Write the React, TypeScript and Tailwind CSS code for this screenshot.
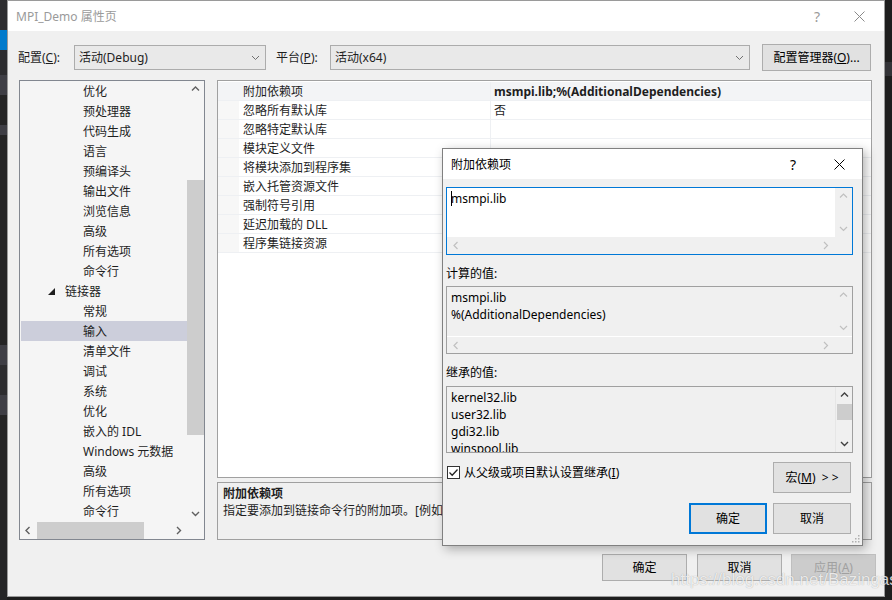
import React from "react";

type Dir = "up" | "down" | "left" | "right";

function Chev({ dir, color = "#606060", w = 1.4 }: { dir: Dir; color?: string; w?: number }) {
  const d: Record<Dir, string> = {
    up: "M1 5.5 L4.5 2 L8 5.5",
    down: "M1 3 L4.5 6.5 L8 3",
    left: "M5.5 1 L2 4.5 L5.5 8",
    right: "M3 1 L6.5 4.5 L3 8",
  };
  return (
    <svg width="9" height="9" viewBox="0 0 9 9" fill="none">
      <path d={d[dir]} stroke={color} strokeWidth={w} />
    </svg>
  );
}

function CloseX({ color }: { color: string }) {
  return (
    <svg width="11" height="11" viewBox="0 0 11 11">
      <path d="M0.5 0.5 L10.5 10.5 M10.5 0.5 L0.5 10.5" stroke={color} strokeWidth="1" />
    </svg>
  );
}

const treeItems: { t: string; head?: boolean; sel?: boolean }[] = [
  { t: "优化" },
  { t: "预处理器" },
  { t: "代码生成" },
  { t: "语言" },
  { t: "预编译头" },
  { t: "输出文件" },
  { t: "浏览信息" },
  { t: "高级" },
  { t: "所有选项" },
  { t: "命令行" },
  { t: "链接器", head: true },
  { t: "常规" },
  { t: "输入", sel: true },
  { t: "清单文件" },
  { t: "调试" },
  { t: "系统" },
  { t: "优化" },
  { t: "嵌入的 IDL" },
  { t: "Windows 元数据" },
  { t: "高级" },
  { t: "所有选项" },
  { t: "命令行" },
];

const props: [string, string][] = [
  ["附加依赖项", "msmpi.lib;%(AdditionalDependencies)"],
  ["忽略所有默认库", "否"],
  ["忽略特定默认库", ""],
  ["模块定义文件", ""],
  ["将模块添加到程序集", ""],
  ["嵌入托管资源文件", ""],
  ["强制符号引用", ""],
  ["延迟加载的 DLL", ""],
  ["程序集链接资源", ""],
];

const btn =
  "flex items-center justify-center bg-[#e1e1e1] border border-[#adadad] text-[12px] text-black";

function Combo({ text, width }: { text: string; width: string }) {
  return (
    <div className={`${width} h-[25px] flex items-center justify-between bg-[#e9e9e9] border border-[#acacac] pl-[4px] pr-[5px]`}>
      <span>{text}</span>
      <Chev dir="down" color="#707070" w={1} />
    </div>
  );
}

export default function App() {
  return (
    <div className="relative w-[892px] h-[600px] overflow-hidden flex bg-[#1e1e1e] text-[12px] text-[#1e1e1e] font-['Noto_Sans','Noto_Sans_CJK_SC',sans-serif] leading-[17px]">
      {/* IDE behind, left edge */}
      <div className="w-[7px] flex flex-col shrink-0">
        <div className="h-[30px] bg-[#2d2d30]" />
        <div className="h-[20px] bg-[#007acc]" />
        <div className="h-[25px] bg-[#2d2d30]" />
        <div className="h-[20px] bg-[#3f3f46]" />
        <div className="h-[30px] bg-[#252526]" />
        <div className="h-[10px] bg-[#3f3f46]" />
        <div className="h-[210px] bg-[#252526]" />
        <div className="h-[20px] bg-[#3f3f46]" />
        <div className="h-[30px] bg-[#2d2d30]" />
        <div className="h-[20px] bg-[#3f3f46]" />
        <div className="flex-1 bg-[#252526]" />
      </div>

      {/* main property pages window */}
      <div className="w-[878px] h-[597px] shrink-0 flex flex-col border border-[#9a9a9a] bg-[#f0f0f0]">
        <div className="h-[30px] bg-white flex items-center pl-[8px] pr-[19px] text-[#9a9a9a]">
          <span className="flex-1">MPI_Demo 属性页</span>
          <span className="text-[14px] mr-[34px]">?</span>
          <CloseX color="#8a8a8a" />
        </div>

        {/* config row */}
        <div className="mt-[13px] h-[27px] flex items-center pl-[10px]">
          <span className="w-[56px]">
            配置(<u>C</u>):
          </span>
          <Combo text="活动(Debug)" width="w-[192px]" />
          <span className="ml-[10px] w-[54px]">
            平台(<u>P</u>):
          </span>
          <Combo text="活动(x64)" width="w-[420px]" />
          <div className={`${btn} ml-[12px] w-[109px] h-[27px]`}>
            配置管理器(<u>O</u>)...
          </div>
        </div>

        {/* content */}
        <div className="mt-[9px] flex pl-[11px]">
          {/* tree */}
          <div className="w-[186px] h-[460px] border border-[#828790] bg-[#f5f5f5] flex flex-col">
            <div className="flex flex-1 min-h-0">
              <div className="flex-1 flex flex-col pl-[1px]">
                {treeItems.map((it, i) => (
                  <div
                    key={i}
                    className={`h-[20px] shrink-0 flex items-center ${it.head ? "pl-[27px]" : "pl-[62px]"} ${it.sel ? "bg-[#cccedb]" : ""}`}
                  >
                    {it.head && (
                      <svg width="7" height="7" viewBox="0 0 7 7" className="mr-[10px]">
                        <polygon points="7,0 7,7 0,7" fill="#1e1e1e" />
                      </svg>
                    )}
                    {it.t}
                  </div>
                ))}
              </div>
              <div className="w-[17px] flex flex-col items-center">
                <div className="h-[17px] flex items-center justify-center">
                  <Chev dir="up" />
                </div>
                <div className="mt-[82px] w-[17px] h-[255px] bg-[#cdcdcd]" />
                <div className="flex-1" />
                <div className="h-[17px] flex items-center justify-center">
                  <Chev dir="down" />
                </div>
              </div>
            </div>
            <div className="h-[17px] flex items-center">
              <div className="w-[17px] flex justify-center">
                <Chev dir="left" />
              </div>
              <div className="w-[107px] h-[17px] bg-[#cdcdcd]" />
              <div className="flex-1" />
              <div className="w-[17px] flex justify-center">
                <Chev dir="right" />
              </div>
              <div className="w-[17px]" />
            </div>
          </div>

          {/* property grid + description */}
          <div className="ml-[12px] w-[655px] flex flex-col">
            <div className="h-[398px] border border-[#a0a0a0] bg-white pt-[1px]">
              {props.map(([k, v], i) => (
                <div
                  key={i}
                  className={`h-[19px] flex border-b border-[#eef0f3] ${i === 0 ? "bg-[#f3f4f6]" : ""}`}
                >
                  <div className={`w-[21px] ${i === 0 ? "" : "bg-[#f7f7f7]"}`} />
                  <div className="w-[252px] pl-[4px] flex items-center border-r border-[#eef0f3]">{k}</div>
                  <div className={`flex-1 pl-[3px] flex items-center ${i === 0 ? "font-bold" : ""}`}>{v}</div>
                </div>
              ))}
            </div>
            <div className="mt-[4px] h-[58px] border border-[#a0a0a0] bg-[#f0f0f0] pl-[5px] pt-[2px]">
              <div className="font-bold">附加依赖项</div>
              <div>指定要添加到链接命令行的附加项。[例如 kernel32.lib]</div>
            </div>
          </div>
        </div>

        {/* bottom buttons */}
        <div className="mt-[14px] flex pl-[594px]">
          <div className={`${btn} w-[85px] h-[27px]`}>确定</div>
          <div className={`${btn} ml-[10px] w-[85px] h-[27px]`}>取消</div>
          <div className={`${btn} ml-[9px] w-[85px] h-[27px] !bg-[#cccccc] !border-[#bfbfbf] !text-[#a0a0a0]`}>
            应用(<u>A</u>)
          </div>
        </div>
      </div>

      {/* IDE behind, right edge */}
      <div className="flex-1 flex flex-col">
        <div className="h-[62px] bg-[#1e1e1e]" />
        <div className="h-[14px] bg-[#333337]" />
        <div className="flex-1 bg-[#1e1e1e]" />
      </div>

      {/* modal dialog */}
      <div className="absolute left-[442px] top-[148px] w-[421px] h-[398px] flex flex-col border border-[#808080] bg-[#f0f0f0] shadow-[3px_3px_10px_rgba(0,0,0,0.3)]">
        <div className="h-[30px] bg-white flex items-center pl-[8px] pr-[17px] text-black">
          <span className="flex-1">附加依赖项</span>
          <span className="text-[14px] mr-[38px]">?</span>
          <CloseX color="#000" />
        </div>
        <div className="flex-1 flex flex-col pl-[3px] text-black">
          {/* editable box */}
          <div className="mt-[8px] w-[407px] h-[68px] border border-[#0078d7] flex flex-col">
            <div className="flex-1 flex">
              <div className="flex-1 bg-white pl-[4px] pt-[2px] flex items-start">
                <span className="relative">
                  <span className="absolute left-0 top-[1px] w-[1px] h-[15px] bg-black" />
                  msmpi.lib
                </span>
              </div>
              <div className="w-[17px] bg-[#f0f0f0] flex flex-col items-center justify-between py-[4px]">
                <Chev dir="up" color="#c0c0c0" w={1.2} />
                <Chev dir="down" color="#c0c0c0" w={1.2} />
              </div>
            </div>
            <div className="h-[17px] bg-[#f0f0f0] flex items-center justify-between pl-[5px] pr-[22px]">
              <Chev dir="left" color="#c0c0c0" w={1.2} />
              <Chev dir="right" color="#c0c0c0" w={1.2} />
            </div>
          </div>

          <div className="pt-[10px] pb-[4px]">计算的值:</div>
          <div className="w-[407px] h-[68px] border border-[#a0a0a0] flex flex-col">
            <div className="flex-1 flex">
              <div className="flex-1 pl-[4px] pt-[2px]">
                <div>msmpi.lib</div>
                <div>%(AdditionalDependencies)</div>
              </div>
              <div className="w-[17px] flex flex-col items-center justify-between py-[4px]">
                <Chev dir="up" color="#c0c0c0" w={1.2} />
                <Chev dir="down" color="#c0c0c0" w={1.2} />
              </div>
            </div>
            <div className="h-[17px] border-t border-white flex items-center justify-between pl-[5px] pr-[22px]">
              <Chev dir="left" color="#c0c0c0" w={1.2} />
              <Chev dir="right" color="#c0c0c0" w={1.2} />
            </div>
          </div>

          <div className="pt-[10px] pb-[5px]">继承的值:</div>
          <div className="w-[407px] h-[67px] border border-[#a0a0a0] flex overflow-hidden">
            <div className="flex-1 pl-[4px] pt-[2px]">
              <div>kernel32.lib</div>
              <div>user32.lib</div>
              <div>gdi32.lib</div>
              <div>winspool.lib</div>
            </div>
            <div className="w-[17px] flex flex-col items-center border-l border-[#e6e6e6]">
              <div className="h-[17px] flex items-center justify-center">
                <Chev dir="up" color="#404040" w={1.4} />
              </div>
              <div className="w-[15px] h-[16px] bg-[#cdcdcd]" />
              <div className="flex-1" />
              <div className="h-[17px] flex items-center justify-center">
                <Chev dir="down" color="#404040" w={1.4} />
              </div>
            </div>
          </div>

          {/* inherit checkbox + macros */}
          <div className="mt-[9px] flex items-start pr-[10px]">
            <div className="flex-1 flex items-center pt-[2px] pl-[1px]">
              <div className="w-[13px] h-[13px] border border-[#333] bg-white flex items-center justify-center">
                <svg width="11" height="11" viewBox="0 0 11 11">
                  <path d="M1.5 5.5 L4.2 8.2 L9.5 2.5" stroke="#222" strokeWidth="1.3" fill="none" />
                </svg>
              </div>
              <span className="ml-[4px]">
                从父级或项目默认设置继承(<u>I</u>)
              </span>
            </div>
            <div className={`${btn} w-[78px] h-[31px] mr-[1px]`}>
              宏(<u>M</u>)&nbsp;&nbsp;&gt; &gt;
            </div>
          </div>

          <div className="mt-[10px] flex justify-end pr-[11px]">
            <div className={`${btn} w-[78px] h-[31px] !border-2 !border-[#0078d7]`}>确定</div>
            <div className={`${btn} ml-[6px] w-[78px] h-[31px]`}>取消</div>
          </div>
          <div className="flex-1 flex justify-end items-end pr-[2px] pb-[2px]">
            <svg width="8" height="8" viewBox="0 0 8 8">
              <g fill="#b0b0b0">
                <rect x="6" y="0" width="1.5" height="1.5" />
                <rect x="3" y="3" width="1.5" height="1.5" />
                <rect x="6" y="3" width="1.5" height="1.5" />
                <rect x="0" y="6" width="1.5" height="1.5" />
                <rect x="3" y="6" width="1.5" height="1.5" />
                <rect x="6" y="6" width="1.5" height="1.5" />
              </g>
            </svg>
          </div>
        </div>
      </div>

      {/* watermark */}
      <div className="absolute left-[671px] top-[570px] text-[17px] leading-[20px] text-white/80 font-['Liberation_Sans',Arial,sans-serif] [text-shadow:0_0_1px_rgba(0,0,0,0.35)]">
        https://blog.csdn.net/Bazingas
      </div>
    </div>
  );
}
